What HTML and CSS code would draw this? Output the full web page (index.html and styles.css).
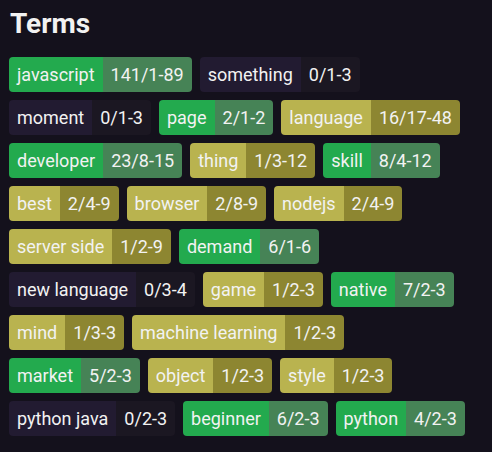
FILE: index.html
```html
<!DOCTYPE html>
<html lang="en">
<head>
  <meta charset="UTF-8" />
  <title>Terms</title>
  <link rel="stylesheet" href="styles.css">
</head>
<body>
  <h2>Terms</h2>
  <div class="terms">
    <span class="tag good"><span class="name">javascript</span><span class="count">141/1-89</span></span>
    <span class="tag none"><span class="name">something</span><span class="count">0/1-3</span></span>
    <span class="tag none"><span class="name">moment</span><span class="count">0/1-3</span></span>
    <span class="tag good"><span class="name">page</span><span class="count">2/1-2</span></span>
    <span class="tag some"><span class="name">language</span><span class="count">16/17-48</span></span>
    <span class="tag good"><span class="name">developer</span><span class="count">23/8-15</span></span>
    <span class="tag some"><span class="name">thing</span><span class="count">1/3-12</span></span>
    <span class="tag good"><span class="name">skill</span><span class="count">8/4-12</span></span>
    <span class="tag some"><span class="name">best</span><span class="count">2/4-9</span></span>
    <span class="tag some"><span class="name">browser</span><span class="count">2/8-9</span></span>
    <span class="tag some"><span class="name">nodejs</span><span class="count">2/4-9</span></span>
    <span class="tag some"><span class="name">server side</span><span class="count">1/2-9</span></span>
    <span class="tag good"><span class="name">demand</span><span class="count">6/1-6</span></span>
    <span class="tag none"><span class="name">new language</span><span class="count">0/3-4</span></span>
    <span class="tag some"><span class="name">game</span><span class="count">1/2-3</span></span>
    <span class="tag good"><span class="name">native</span><span class="count">7/2-3</span></span>
    <span class="tag some"><span class="name">mind</span><span class="count">1/3-3</span></span>
    <span class="tag some"><span class="name">machine learning</span><span class="count">1/2-3</span></span>
    <span class="tag good"><span class="name">market</span><span class="count">5/2-3</span></span>
    <span class="tag some"><span class="name">object</span><span class="count">1/2-3</span></span>
    <span class="tag some"><span class="name">style</span><span class="count">1/2-3</span></span>
    <span class="tag none"><span class="name">python java</span><span class="count">0/2-3</span></span>
    <span class="tag good"><span class="name">beginner</span><span class="count">6/2-3</span></span>
    <span class="tag good"><span class="name">python</span><span class="count">4/2-3</span></span>
  </div>
</body>
</html>
```

FILE: styles.css
```css
body {
  font-family: Roboto, "Liberation Sans", sans-serif;
  background: #14111c;
  color: #f2f2f2;
  margin: 0;
  padding: 0 16px 0 9px;
}
h2 {
  font-size: 28px;
  font-weight: 700;
  margin: 0;
  padding: 7px 1px 0;
  height: 57px;
  box-sizing: border-box;
}
.terms {
  display: flex;
  flex-wrap: wrap;
  gap: 8px;
}
.tag {
  display: flex;
  height: 35px;
  border-radius: 4px;
  overflow: hidden;
  font-size: 18px;
  line-height: 35px;
}
.name, .count {
  padding: 0 8px;
}
.good .name { background: #23aa4e; }
.good .count { background: #468356; }
.some .name { background: #b9b34f; }
.some .count { background: #8d8631; }
.none .name { background: #221b31; }
.none .count { background: #1b1722; }
```
